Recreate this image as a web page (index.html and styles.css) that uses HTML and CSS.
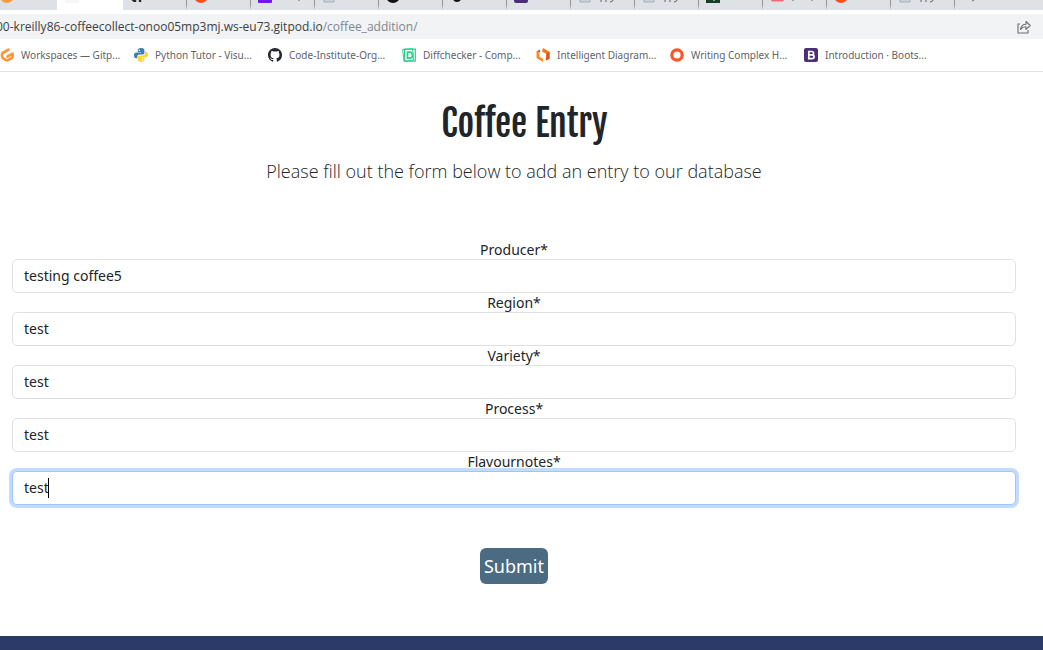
FILE: index.html
```html
<!DOCTYPE html>
<html lang="en">
<head>
<meta charset="utf-8">
<title>Coffee Entry</title>
<link rel="stylesheet" href="styles.css">
</head>
<body>
<header class="browser">
  <div class="tabs">
    <div class="tab tab-first"><svg class="fav" viewBox="0 0 14 14"><circle cx="7" cy="7" r="7" fill="#ff9a3c"/></svg></div>
    <div class="tab tab-active"><svg class="fav" viewBox="0 0 14 14"><rect width="14" height="14" fill="#f7f6f5"/></svg></div>
    <div class="tab tab-after"><svg class="fav" viewBox="0 0 14 14"><path d="M1.500 9.500l3 2.500M5 13v-4M10 13V9" stroke="#24292f" stroke-width="2.400" fill="none"/></svg></div>
    <div class="tab"><svg class="fav" viewBox="0 0 14 14"><circle cx="7" cy="7" r="7" fill="#ff4f20"/></svg></div>
    <div class="tab"><svg class="fav" viewBox="0 0 14 14"><rect width="14" height="14" rx="1" fill="#7612f4"/></svg><svg class="bits" viewBox="0 0 34 14"><path d="M19 10v2" stroke="#5f6368" fill="none"/></svg></div>
    <div class="tab"><svg class="fav" viewBox="0 0 14 14"><path d="M2 1h10v12H2z" fill="#c9d3e0" stroke="#a7afba"/></svg></div>
    <div class="tab"><svg class="fav" viewBox="0 0 14 14"><circle cx="7" cy="7" r="7" fill="#111"/><circle cx="7" cy="8" r="3" fill="#dee1e6"/></svg></div>
    <div class="tab"><svg class="fav" viewBox="0 0 14 14"><circle cx="7" cy="9" r="4" fill="#111"/></svg></div>
    <div class="tab"><svg class="fav" viewBox="0 0 14 14"><rect width="14" height="14" rx="2" fill="#4b2e78"/></svg></div>
    <div class="tab"><svg class="fav" viewBox="0 0 14 14"><path d="M2 1h10v12H2z" fill="#c9d3e0" stroke="#a7afba"/></svg><svg class="bits" viewBox="0 0 34 14"><path d="M1 10v3M6 10v3M10 13q3 0 4-4" stroke="#5f6368" fill="none"/></svg></div>
    <div class="tab"><svg class="fav" viewBox="0 0 14 14"><path d="M2 1h10v12H2z" fill="#c9d3e0" stroke="#a7afba"/></svg><svg class="bits" viewBox="0 0 34 14"><path d="M1 10v3M6 10v3M10 13q3 0 4-4" stroke="#5f6368" fill="none"/></svg></div>
    <div class="tab"><svg class="fav" viewBox="0 0 14 14"><rect width="14" height="14" fill="#173d2b"/><path d="M8 10v2" stroke="#fff"/></svg></div>
    <div class="tab"><svg class="fav" viewBox="0 0 14 14"><rect x="1" width="13" height="12.5" rx="2" fill="#ef6b74"/></svg><svg class="bits" viewBox="0 0 34 14"><path d="M1 10v2M20 10v2" stroke="#5f6368" fill="none"/></svg></div>
    <div class="tab"><svg class="fav" viewBox="0 0 14 14"><circle cx="7" cy="7" r="7" fill="#ff4f20"/></svg></div>
    <div class="tab"><svg class="fav" viewBox="0 0 14 14"><path d="M2 1h10v12H2z" fill="#c9d3e0" stroke="#a7afba"/></svg><svg class="bits" viewBox="0 0 34 14"><path d="M1 10v3M6 10v3M10 13q3 0 4-4" stroke="#5f6368" fill="none"/></svg></div>
    <div class="tab tab-last"><svg class="fav" viewBox="0 0 14 14"><path d="M10 12q2 0 3-3" stroke="#5f6368" fill="none"/></svg></div>
  </div>
  <div class="address">
    <div class="url">00-kreilly86-coffeecollect-onoo05mp3mj.ws-eu73.gitpod.io<span class="path">/coffee_addition/</span></div>
    <button class="share" aria-label="Share this page"><svg viewBox="0 0 14 14" fill="none" stroke="#6b6f73" stroke-width="1.1"><path d="M3 4H1v9h10v-3"/><path d="M3.500 9.500C4 6 6 4.200 9 4.200V1.500l4.200 4L9 9.300V6.800C6.500 6.800 5 7.500 3.500 9.500z" stroke-linejoin="round"/></svg></button>
  </div>
  <nav class="bookmarks">
    <a href="#"><svg viewBox="0 0 14 14"><path d="M8.500 1.600L3 4.700Q2 5.300 2 6.500v2q0 1 1 1.700l3 1.900q1 .5 2 0l4-2.300q.6-.4.600-1.200V5.800L7.500 8.500" fill="none" stroke="#ff9636" stroke-width="2.700" stroke-linecap="round" stroke-linejoin="round"/></svg>Workspaces — Gitp...</a>
    <a href="#"><svg viewBox="0 0 14 14"><path d="M7 0C4.500 0 3.800 1 3.800 2.200V4h3.400v.6H2.300C.8 4.600 0 5.800 0 7.500s.8 2.700 2 2.700h1.300V8.500c0-1.100.9-2 2-2h3.400c1 0 1.700-.8 1.700-1.700V2.200C10.400.8 9.300 0 7 0z" fill="#3c7db3"/><path d="M7 14c2.500 0 3.400-1 3.400-2.200V10H7v-.6h4.900c1.400 0 2.100-1.200 2.100-2.800s-.8-2.800-2-2.800h-1v1.600c0 1.100-.9 2-2 2H5.500c-1 0-1.700.8-1.700 1.700v2.700C3.800 13.200 5 14 7 14z" fill="#ffd43b"/><circle cx="5.400" cy="2.200" r=".7" fill="#fff"/><circle cx="8.700" cy="11.800" r=".7" fill="#fff"/></svg>Python Tutor - Visu...</a>
    <a href="#"><svg viewBox="0 0 16 16"><path fill="#24292f" d="M8 0C3.580 0 0 3.580 0 8c0 3.540 2.290 6.530 5.470 7.590.4.070.55-.17.55-.38 0-.19-.01-.82-.01-1.490-2.010.37-2.530-.49-2.690-.94-.09-.23-.48-.94-.82-1.130-.28-.15-.68-.52-.01-.53.63-.01 1.080.58 1.230.82.72 1.210 1.870.87 2.330.66.07-.52.28-.87.51-1.070-1.780-.2-3.640-.89-3.640-3.950 0-.87.31-1.590.82-2.150-.08-.2-.36-1.020.08-2.120 0 0 .67-.21 2.200.82.64-.18 1.320-.27 2-.27s1.360.09 2 .27c1.530-1.040 2.200-.82 2.200-.82.44 1.100.16 1.920.08 2.120.51.56.82 1.270.82 2.150 0 3.070-1.870 3.750-3.650 3.950.29.25.54.73.54 1.480 0 1.070-.01 1.930-.01 2.200 0 .21.15.46.55.38A8.010 8.010 0 0 0 16 8c0-4.420-3.580-8-8-8z"/></svg>Code-Institute-Org...</a>
    <a href="#"><svg viewBox="0 0 14 14" fill="none" stroke="#28d08c"><path d="M.7 1.500l10-.8.800 11.500-9.500 1z"/><path d="M2.500 1.200h10.800v12H2.500z" stroke-width="1.200"/><path d="M5.500 4.200h2.300q2.700 0 2.700 3t-2.700 3H5.500z" stroke-width="1.700"/></svg>Diffchecker - Comp...</a>
    <a href="#"><svg viewBox="0 0 14 14"><path d="M.5 3.500l3 1.200v4L7 11v3L.5 10z" fill="#ff8a22"/><path d="M.5 3.500L4 1.500v3z" fill="#d95316"/><path d="M7 0l6.500 3.700v7L10 12.500V5.700L6 3.400z" fill="#f47a20"/><path d="M13.500 3.700v7L10 12.500V9.500l1-.5V5z" fill="#d9531e"/></svg>Intelligent Diagram...</a>
    <a href="#"><svg viewBox="0 0 14 14"><circle cx="7" cy="7" r="5.200" fill="none" stroke="#ff5425" stroke-width="3.200"/></svg>Writing Complex H...</a>
    <a href="#"><svg viewBox="0 0 14 14"><rect width="14" height="14" rx="2" fill="#4b2e78"/><path d="M4.800 3.500h2.800q2 0 2 1.700t-2 1.700H4.800h3q2.300 0 2.300 1.900t-2.300 1.900h-3z" fill="none" stroke="#fff" stroke-width="1.700"/></svg>Introduction · Boots...</a>
  </nav>
</header>
<main class="page">
  <h1>Coffee Entry</h1>
  <p class="lead">Please fill out the form below to add an entry to our database</p>
  <form>
    <label for="producer">Producer*</label>
    <input id="producer" type="text" value="testing coffee5">
    <label for="region">Region*</label>
    <input id="region" type="text" value="test">
    <label for="variety">Variety*</label>
    <input id="variety" type="text" value="test">
    <label for="process">Process*</label>
    <input id="process" type="text" value="test">
    <label for="notes">Flavournotes*</label>
    <div class="field"><input id="notes" class="focused" type="text" value="test"><span class="caret"></span></div>
    <button class="submit" type="submit">Submit</button>
  </form>
</main>
<footer></footer>
</body>
</html>
```
FILE: styles.css
```css
* { box-sizing: border-box; }
body {
  margin: 0;
  min-height: 100vh;
  display: flex;
  flex-direction: column;
  background: #fff;
  color: #212529;
  font-family: "Noto Sans", sans-serif;
}
.browser { border-bottom: 1px solid #e0e2e4; }
.tabs {
  display: flex;
  height: 10px;
  overflow: hidden;
  background: #dee1e6;
}
.tab {
  display: flex;
  flex: 0 0 64px;
  align-items: flex-end;
  gap: 8px;
  padding: 0 0 2px 7px;
  border-left: 1px solid #92969c;
  border-bottom: 5px solid #dee1e6;
}
.tab-first { flex-basis: 57px; padding-left: 0; border-left: 0; border-radius: 0 0 6px 0; }
.tab-active { flex-basis: 66px; background: #fff; border-color: #fff; }
.tab-after { flex-basis: 63px; border-left: 0; border-radius: 0 0 0 6px; }
.tab-last { flex: 1; }
.fav { width: 14px; height: 14px; flex: none; }
.bits { width: 34px; height: 14px; flex: none; }
.address {
  display: flex;
  align-items: center;
  justify-content: space-between;
  height: 25px;
  margin-top: 4px;
  padding-right: 12px;
  background: #f1f3f4;
}
.url { margin-left: -4px; font: 12px "Open Sans", sans-serif; color: #3c4043; white-space: nowrap; }
.path { color: #80868b; }
.share { display: flex; padding: 0; border: 0; background: none; }
.share svg { width: 14px; height: 14px; }
.bookmarks { display: flex; height: 32px; align-items: center; }
.bookmarks a {
  display: flex;
  flex: 0 1 134px;
  align-items: center;
  gap: 7px;
  color: #5f6368;
  font: 10px "Noto Sans", sans-serif;
  text-decoration: none;
  white-space: nowrap;
}
.bookmarks svg { flex: none; width: 14px; height: 14px; }
.page { flex: 1; padding: 25px 27px 50px 12px; text-align: center; }
h1 {
  margin: 0;
  padding-left: 21px;
  font: 500 36px/54px "Fjalla One", sans-serif;
}
.lead { margin: 6px 0 55px; font: 300 18px/28px "Open Sans", sans-serif; }
form { display: flex; flex-direction: column; align-items: stretch; }
label { font-size: 14px; line-height: 19px; }
input {
  width: 100%;
  height: 34px;
  padding: 0 11px 1px;
  border: 1px solid #dee2e6;
  border-radius: 5px;
  background: #fff;
  color: #212529;
  font: 14px "Noto Sans", sans-serif;
}
.field { position: relative; }
.focused { display: block; border-color: #9ec5fe; box-shadow: 0 0 0 3px #c2dbfe; }
.caret { position: absolute; left: 36px; top: 7px; width: 1px; height: 20px; background: #000; }
.submit {
  align-self: center;
  margin-top: 43px;
  height: 36px;
  padding: 0 4px;
  border: 0;
  border-radius: 6px;
  background: #4a6b82;
  color: #fff;
  font: 18px "Noto Sans", sans-serif;
}
footer { height: 14px; background: #2b3a67; }
```
